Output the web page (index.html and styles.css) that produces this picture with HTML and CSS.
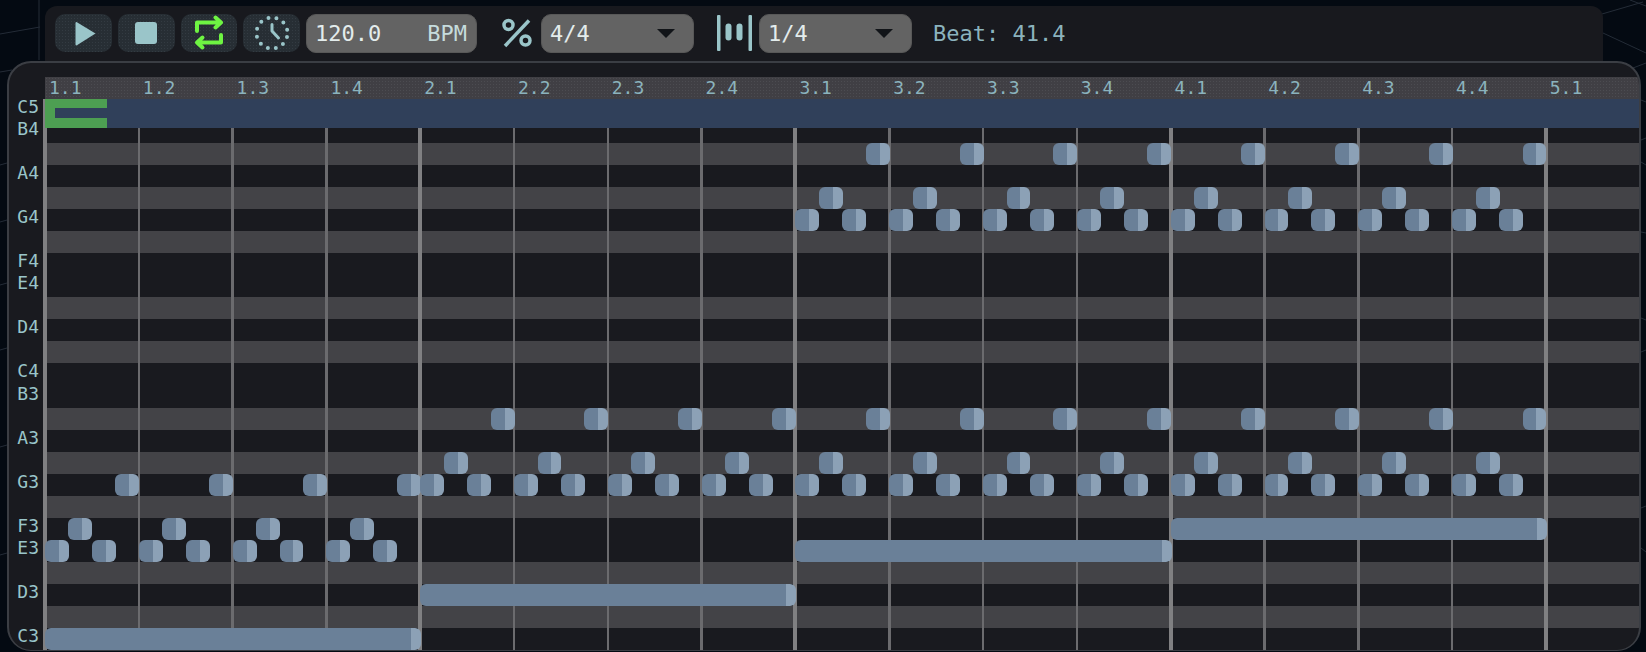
FILE: index.html
```html
<!DOCTYPE html>
<html lang="en">
<head>
<meta charset="UTF-8" />
<title>Piano Roll</title>
<link rel="stylesheet" href="styles.css">
</head>
<body>
  <!-- faint network lines behind the app -->
  <svg class="backdrop" width="1646" height="652" aria-hidden="true">
    <path d="M0 34L40 27M39 0V60M0 72L12 70M0 165L7 163M0 222L7 220M0 285L7 283M0 350L7 348M0 447L7 445M0 555L7 553" />
    <path d="M1602 14L1643 2M1603 33L1646 53M1630 0L1646 6M1633 68L1646 63M1641 100L1646 102M1641 140L1646 138M1641 162L1646 165M1641 232L1646 233M1641 318L1646 320M1641 352L1646 350M1641 508L1646 506M1641 548L1646 552" />
  </svg>

  <div class="toolbar">
    <button class="tool" aria-label="Play">
      <svg class="play-icon" width="21" height="25" viewBox="0 0 21 25"><path class="fill" d="M1.500 1L20.500 12.500L1.500 24.500Q0.500 24.500 0.500 23.500V2Q0.500 1 1.500 1Z" /></svg>
    </button>
    <button class="tool" aria-label="Stop">
      <svg width="22" height="22" viewBox="0 0 22 22"><rect class="fill" width="22" height="22" rx="3" /></svg>
    </button>
    <button class="tool" aria-label="Loop">
      <svg class="loop-icon" width="30" height="36" viewBox="0 0 30 36">
        <path d="M3 16V7.500H27M21.500 2.500L27 7.500L21.500 12.500" />
        <path d="M27 20V27.500H3M8.500 22.500L3 27.500L8.500 32.500" />
      </svg>
    </button>
    <button class="tool" aria-label="Metronome">
      <svg class="clock-icon" width="36" height="36" viewBox="0 0 36 36">
        <circle class="dots" cx="18" cy="18" r="15.500" />
        <path class="hands" d="M18 9.500V16L24.500 23" />
      </svg>
    </button>
    <div class="field bpm"><span>120.0</span><span class="unit">BPM</span></div>

    <svg class="percent-icon" width="30" height="30" viewBox="0 0 30 30">
      <path d="M3 28L27 2.500" />
      <circle cx="6.500" cy="7" r="4.500" />
      <circle cx="23.500" cy="22.500" r="4.500" />
    </svg>
    <div class="field select"><span>4/4</span><i class="caret"></i></div>

    <svg class="bars-icon" width="35" height="36" viewBox="0 0 35 36">
      <rect x="0" y="0" width="3.500" height="36" rx="1" />
      <rect x="8.500" y="8.500" width="6" height="17" rx="3" />
      <rect x="19.500" y="8.500" width="6" height="17" rx="3" />
      <rect x="31.500" y="0" width="3.500" height="36" rx="1" />
    </svg>
    <div class="field select"><span>1/4</span><i class="caret"></i></div>

    <div class="beat">Beat: 41.4</div>
  </div>

  <div class="panel">
    <div class="ruler">
      <span>1.1</span><span>1.2</span><span>1.3</span><span>1.4</span>
      <span>2.1</span><span>2.2</span><span>2.3</span><span>2.4</span>
      <span>3.1</span><span>3.2</span><span>3.3</span><span>3.4</span>
      <span>4.1</span><span>4.2</span><span>4.3</span><span>4.4</span>
      <span>5.1</span>
    </div>
    <div class="editor">
      <div id="keys" class="keys"></div>
      <div id="roll" class="roll">
        <div id="rows" class="rows"></div>
        <div class="loop-band"><div class="loop-start"></div></div>
      </div>
    </div>
  </div>

  <script src="script.js"></script>
</body>
</html>
```

FILE: styles.css
```css
/* Basic reset */
* {
  box-sizing: border-box;
}
html, body {
  margin: 0;
  height: 100%;
  overflow: hidden;
}
body {
  position: relative;
  display: flex;
  flex-direction: column;
  padding: 6px 5px 1px 7px;
  background: #040a12;
  color: #8bb3bd;
  font-family: "DejaVu Sans Mono", monospace;
}

.backdrop {
  position: absolute;
  top: 0;
  left: 0;
}
.backdrop path {
  fill: none;
  stroke: #242c37;
  stroke-width: 1;
}

/* Top toolbar */
.toolbar {
  position: relative;
  display: flex;
  align-items: center;
  flex: 0 0 55px;
  margin: 0 38px;
  padding: 0 0 1px 10px;
  background: #18191e;
  border-radius: 12px 12px 0 0;
}
.tool {
  display: flex;
  justify-content: center;
  align-items: center;
  width: 56.75px;
  height: 38px;
  margin-right: 6px;
  padding: 0;
  border: 0;
  border-radius: 10px;
  background-color: #272e34;
  background-image: radial-gradient(#333b42 0.7px, transparent 0.8px);
  background-size: 3px 3px;
}
.play-icon {
  margin-left: 5px;
}
.fill {
  fill: #9ac5c9;
}
.loop-icon path {
  fill: none;
  stroke: #6ef442;
  stroke-width: 4;
  stroke-linecap: round;
  stroke-linejoin: round;
}
.clock-icon .dots {
  fill: none;
  stroke: #9ac5c9;
  stroke-width: 4;
  stroke-linecap: round;
  stroke-dasharray: 0 8.115;
  stroke-dashoffset: 4.057;
}
.clock-icon .hands {
  fill: none;
  stroke: #9ac5c9;
  stroke-width: 3;
  stroke-linecap: round;
  stroke-linejoin: round;
}

.field {
  display: flex;
  justify-content: space-between;
  align-items: center;
  height: 39px;
  padding: 0 9px 0 8px;
  background: #636363;
  border: 1px solid #585858;
  border-radius: 10px;
  color: #e3ecec;
  font-size: 22px;
}
.bpm {
  width: 171px;
}
.unit {
  color: #c6dcdd;
}
.select {
  width: 153px;
  padding-right: 18px;
}
.caret {
  width: 0;
  height: 0;
  border-left: 9px solid transparent;
  border-right: 9px solid transparent;
  border-top: 9px solid #111418;
}

.percent-icon {
  margin: 0 9px 0 25px;
  fill: none;
  stroke: #9ac5c9;
  stroke-width: 3.500;
}
.bars-icon {
  margin: 0 7px 0 23px;
  fill: #9ac5c9;
}
.beat {
  margin-left: 21px;
  font-size: 22px;
  color: #8bb3bd;
}

/* Piano roll panel */
.panel {
  position: relative;
  flex: 1;
  display: flex;
  flex-direction: column;
  padding-top: 14px;
  background: #191a1f;
  border: solid #3b3e44;
  border-width: 2px 2px 1px;
  border-radius: 24px;
  overflow: hidden;
}
.ruler {
  display: grid;
  grid-template-columns: repeat(17, 93.81px);
  flex: 0 0 22px;
  margin-left: 36px;
  background-color: #403f44;
  background-image: radial-gradient(#4c4c51 0.7px, transparent 0.8px);
  background-size: 3px 3px;
  font-size: 18px;
  line-height: 21px;
}
.ruler span {
  padding-left: 4px;
}

.editor {
  flex: 1;
  display: flex;
  min-height: 0;
}
.keys {
  display: grid;
  grid-template-rows: repeat(25, 1fr);
  flex: 0 0 36px;
  padding-right: 6px;
  font-size: 18px;
  text-align: right;
  color: #9ac5c9;
}
.keys div {
  margin-top: -3px;
  white-space: nowrap;
}

.roll {
  position: relative;
  flex: 1;
}
.rows {
  display: grid;
  grid-template-rows: repeat(25, 1fr);
  height: 100%;
}
.row.black {
  background: #434347;
}
.line {
  position: absolute;
  top: 0;
  bottom: 0;
  width: 2.500px;
  background: #6b6b6e;
}
.line.bar {
  width: 4px;
  background: #808082;
}
.loop-band {
  position: absolute;
  top: 0;
  left: 0;
  right: 0;
  height: 29px;
  background: #30405a;
  z-index: 1;
}
.loop-start {
  width: 62px;
  height: 100%;
  border: solid #4d9f52;
  border-width: 9.500px 0 10px 10px;
}
.note {
  position: absolute;
  border-radius: 6px;
  background: linear-gradient(to left, #8ca1b6 10px, #6a8098 10px);
  z-index: 2;
}
```

FILE: script.js
```js
// Piano roll is C3..C5, one row per semitone, top row = C5
const TOP = 72;
const ROW_H = 551 / 25;
const STEP = 93.81 / 4; // one 16th note

const NAMES = ['C', 'C#', 'D', 'D#', 'E', 'F', 'F#', 'G', 'G#', 'A', 'A#', 'B'];
const keys = document.getElementById('keys');
const rows = document.getElementById('rows');
const roll = document.getElementById('roll');

for (let pitch = TOP; pitch >= TOP - 24; pitch--) {
  const name = NAMES[pitch % 12];
  const octave = Math.floor(pitch / 12) - 1;
  const black = name.length > 1;

  const row = document.createElement('div');
  row.className = black ? 'row black' : 'row';
  rows.appendChild(row);

  const key = document.createElement('div');
  key.textContent = black ? '' : name + octave;
  keys.appendChild(key);
}

// Beat lines, every 4th is a bar line
for (let i = 0; i <= 16; i++) {
  const line = document.createElement('div');
  const bar = i % 4 === 0;
  line.className = bar ? 'line bar' : 'line';
  line.style.left = (i * STEP * 4 - (bar ? 2 : 1.25)) + 'px';
  roll.appendChild(line);
}

function addNote(pitch, start, length) {
  const note = document.createElement('div');
  note.className = 'note';
  note.style.left = (start * STEP) + 'px';
  note.style.top = ((TOP - pitch) * ROW_H) + 'px';
  note.style.width = (length * STEP + (length > 1 ? 1 : 0.5)) + 'px';
  note.style.height = ROW_H + 'px';
  roll.appendChild(note);
}

// Repeats a 4 step figure over each beat of a bar (bars count from 0)
function addFigure(bar, figure) {
  for (let beat = 0; beat < 4; beat++) {
    figure.forEach((pitch, step) => addNote(pitch, bar * 16 + beat * 4 + step, 1));
  }
}

const E3 = 52, F3 = 53, G3 = 55, GS3 = 56, AS3 = 58;
const G4 = 67, GS4 = 68, AS4 = 70;

addFigure(0, [E3, F3, E3, G3]);
addFigure(1, [G3, GS3, G3, AS3]);
addFigure(2, [G3, GS3, G3, AS3]);
addFigure(3, [G3, GS3, G3, AS3]);
addFigure(2, [G4, GS4, G4, AS4]);
addFigure(3, [G4, GS4, G4, AS4]);

// Long bass notes, one per bar
addNote(48, 0, 16);
addNote(50, 16, 16);
addNote(52, 32, 16);
addNote(53, 48, 16);
```
